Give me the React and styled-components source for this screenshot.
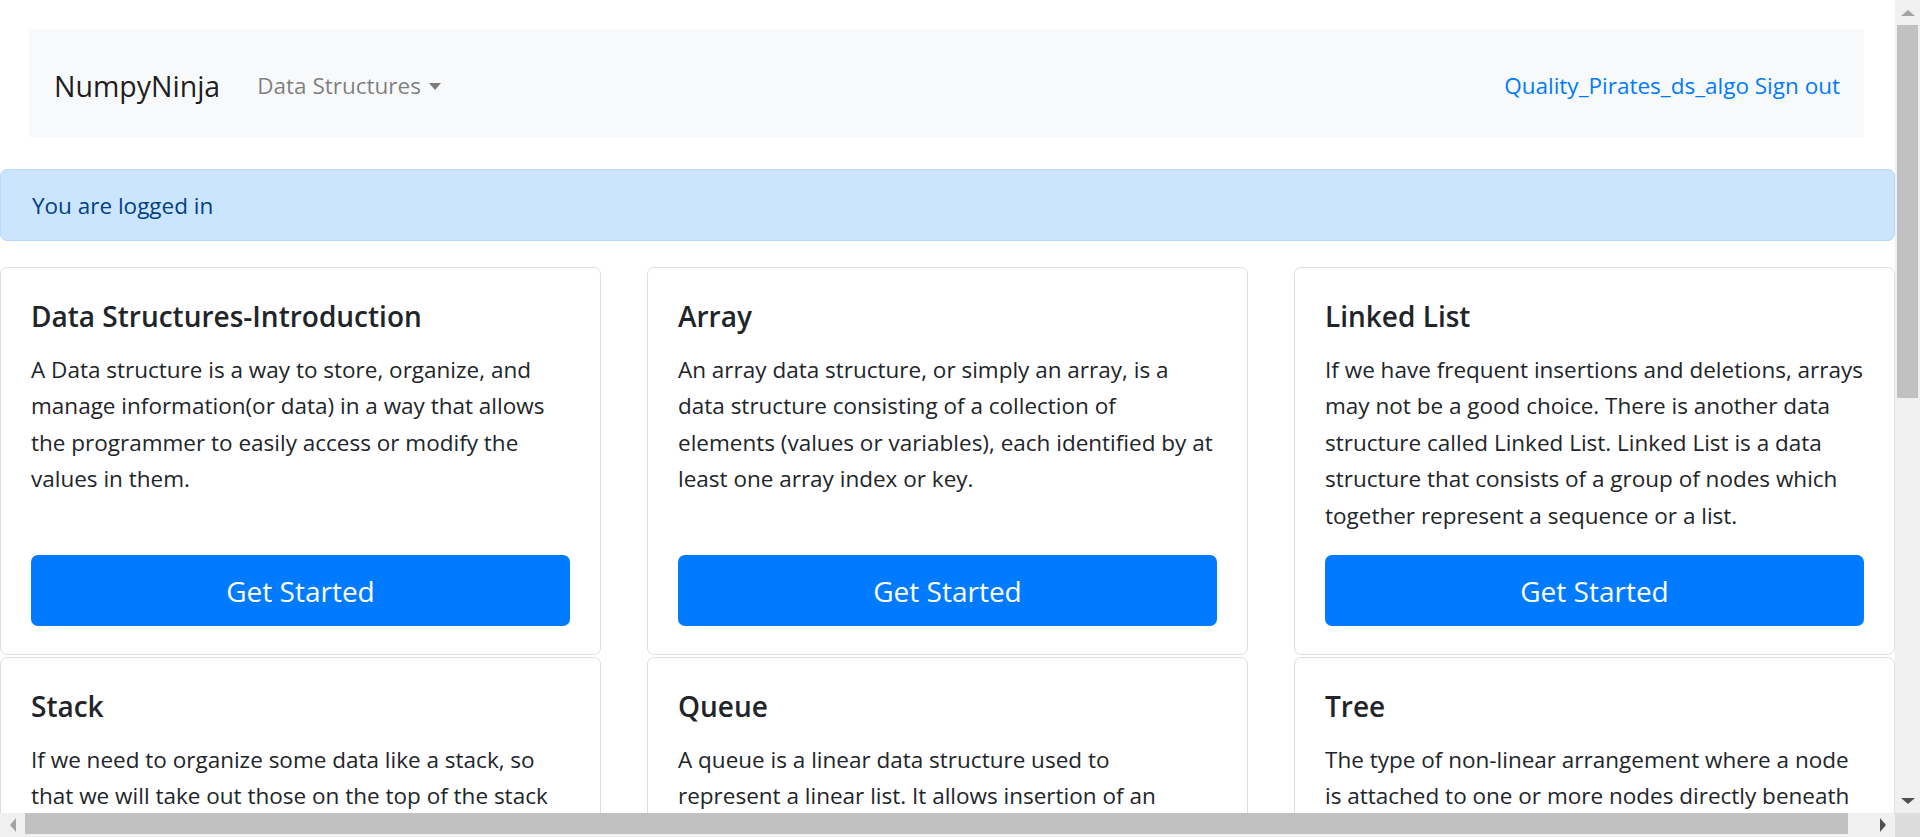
import styled, { createGlobalStyle } from "styled-components"

const GlobalStyle = createGlobalStyle`
    html, body {
        margin: 0;
        padding: 0;
        overflow: hidden;
    }
    body {
        font-family: "Open Sans", "Noto Sans", sans-serif;
        color: #212529;
        background: #fff;
    }
    * {
        box-sizing: border-box;
    }
`

const Frame = styled.div`
    width: 1920px;
    height: 837px;
    display: grid;
    grid-template-columns: 1fr 25px;
    grid-template-rows: 1fr 24px;
    overflow: hidden;
`

const Main = styled.main`
    overflow: hidden;
    background: #fff;
`

const Navbar = styled.nav`
    margin: 29px 31px 0 29px;
    height: 108px;
    background: #f8f9fa;
    display: flex;
    align-items: center;
    padding: 5px 24px 0 25px;
`

const Brand = styled.a`
    font-size: 28.5px;
    color: rgba(0, 0, 0, .9);
    margin-right: 25px;
    line-height: 42px;
`

const NavLink = styled.a`
    font-size: 22.5px;
    color: rgba(0, 0, 0, .5);
    padding: 0 12px;
    display: flex;
    align-items: center;
    line-height: 36px;
`

const Caret = styled.span`
    display: inline-block;
    margin-left: 8px;
    margin-top: 2px;
    border-top: 7px solid;
    border-left: 6.5px solid transparent;
    border-right: 6.5px solid transparent;
`

const UserLinks = styled.div`
    margin-left: auto;
    color: #007bff;
    font-size: 22.5px;
    line-height: 36px;
`

const Alert = styled.div`
    margin-top: 32px;
    height: 72px;
    display: flex;
    align-items: center;
    padding: 0 31px;
    background: #cce5ff;
    border: 1px solid #b8daff;
    border-radius: 7px;
    color: #004085;
    font-size: 22.5px;
`

const CardGrid = styled.div`
    margin-top: 26px;
    display: grid;
    grid-template-columns: repeat(3, 1fr);
    column-gap: 46px;
    row-gap: 2px;
`

const Card = styled.div`
    border: 1px solid rgba(0, 0, 0, .13);
    border-radius: 7px;
    padding: 30px 30px 28px;
    display: flex;
    flex-direction: column;
`

const CardTitle = styled.h5`
    margin: 0 0 18px;
    font-size: 28px;
    font-weight: 600;
    line-height: 36px;
    color: #212529;
`

const CardText = styled.p`
    margin: 0 0 21px;
    font-size: 22.5px;
    line-height: 36.4px;
`

const Button = styled.button`
    margin-top: auto;
    width: 100%;
    height: 71px;
    border: none;
    border-radius: 7px;
    background: #007bff;
    color: #fff;
    font-family: inherit;
    font-size: 28px;
`

const VScroll = styled.div`
    background: #f0f0f0;
    display: flex;
    flex-direction: column;
    align-items: center;
`

const HScroll = styled.div`
    background: #f0f0f0;
    display: flex;
    align-items: center;
`

const Corner = styled.div`
    background: #dcdcdc;
`

const ArrowBox = styled.div`
    width: 25px;
    height: ${props => props.tall ? "25px" : "24px"};
    flex: none;
    display: flex;
    align-items: center;
    justify-content: center;
`

const Arrow = styled.span`
    width: 0;
    height: 0;
    ${props => props.dir === "up" && `
        border-bottom: 6px solid ${props.color};
        border-left: 7px solid transparent;
        border-right: 7px solid transparent;
    `}
    ${props => props.dir === "down" && `
        border-top: 6px solid ${props.color};
        border-left: 7px solid transparent;
        border-right: 7px solid transparent;
    `}
    ${props => props.dir === "left" && `
        border-right: 6px solid ${props.color};
        border-top: 7px solid transparent;
        border-bottom: 7px solid transparent;
    `}
    ${props => props.dir === "right" && `
        border-left: 6px solid ${props.color};
        border-top: 7px solid transparent;
        border-bottom: 7px solid transparent;
    `}
`

const VThumb = styled.div`
    width: 21px;
    height: 373px;
    background: #c1c1c1;
`

const VTrack = styled.div`
    flex: 1;
`

const HThumb = styled.div`
    height: 21px;
    width: 1823px;
    margin-bottom: 3px;
    align-self: flex-start;
    background: #c1c1c1;
`

const HTrack = styled.div`
    flex: 1;
`

const cards = [
    {
        title: "Data Structures-Introduction",
        text: "A Data structure is a way to store, organize, and manage information(or data) in a way that allows the programmer to easily access or modify the values in them."
    },
    {
        title: "Array",
        text: "An array data structure, or simply an array, is a data structure consisting of a collection of elements (values or variables), each identified by at least one array index or key."
    },
    {
        title: "Linked List",
        text: "If we have frequent insertions and deletions, arrays may not be a good choice. There is another data structure called Linked List. Linked List is a data structure that consists of a group of nodes which together represent a sequence or a list."
    },
    {
        title: "Stack",
        text: "If we need to organize some data like a stack, so that we will take out those on the top of the stack first, then we would use the stack data structure."
    },
    {
        title: "Queue",
        text: "A queue is a linear data structure used to represent a linear list. It allows insertion of an element to be done at one end and deletion of an element to be performed at the other end."
    },
    {
        title: "Tree",
        text: "The type of non-linear arrangement where a node is attached to one or more nodes directly beneath it is called a tree."
    }
]

const App = () => {
  return (
    <>
      <GlobalStyle />
      <Frame>
        <Main>
            <Navbar>
                <Brand>NumpyNinja</Brand>
                <NavLink>Data Structures<Caret /></NavLink>
                <UserLinks>Quality_Pirates_ds_algo Sign out</UserLinks>
            </Navbar>

            <Alert>You are logged in</Alert>

            <CardGrid>
                {cards.map(card => (
                    <Card key={card.title}>
                        <CardTitle>{card.title}</CardTitle>
                        <CardText>{card.text}</CardText>
                        <Button>Get Started</Button>
                    </Card>
                ))}
            </CardGrid>
        </Main>

        <VScroll>
            <ArrowBox tall><Arrow dir="up" color="#a3a3a3" /></ArrowBox>
            <VThumb />
            <VTrack />
            <ArrowBox tall><Arrow dir="down" color="#505050" /></ArrowBox>
        </VScroll>

        <HScroll>
            <ArrowBox><Arrow dir="left" color="#a3a3a3" /></ArrowBox>
            <HThumb />
            <HTrack />
            <ArrowBox><Arrow dir="right" color="#505050" /></ArrowBox>
        </HScroll>
        <Corner />
      </Frame>
    </>
  )
}

export default App
